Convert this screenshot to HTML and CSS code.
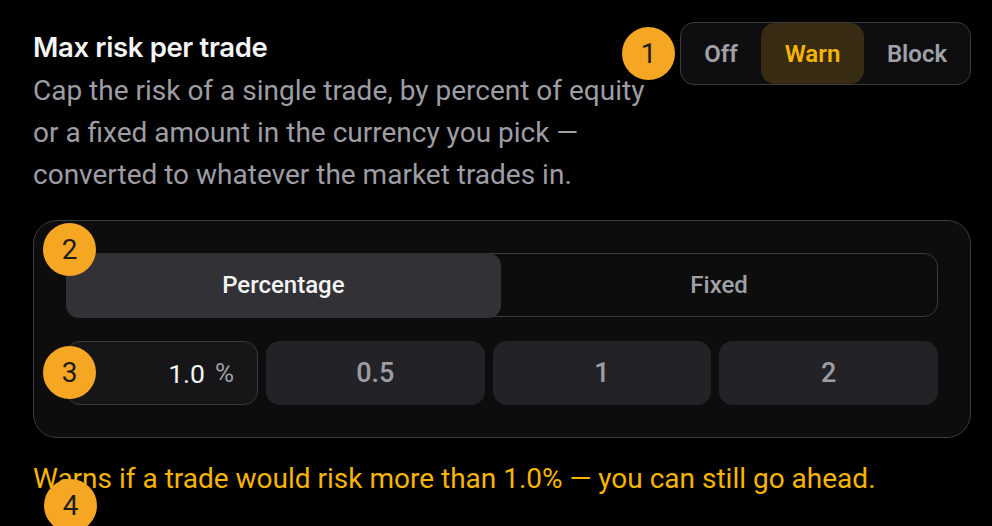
FILE: index.html
```html
<!DOCTYPE html>
<html lang="en">
<head>
<meta charset="utf-8">
<title>Max risk per trade</title>
<link rel="stylesheet" href="styles.css">
</head>
<body>
<section class="rule">
  <header class="rule-head">
    <div class="rule-copy">
      <h2 class="rule-title">Max risk per trade</h2>
      <p class="rule-desc">Cap the risk of a single trade, by percent of equity or a fixed amount in the currency you pick — converted to whatever the market trades in.</p>
    </div>
    <div class="mode-wrap">
      <span class="marker marker-mode">1</span>
      <div class="mode">
        <button class="mode-opt">Off</button>
        <button class="mode-opt is-active">Warn</button>
        <button class="mode-opt">Block</button>
      </div>
    </div>
  </header>

  <div class="panel">
    <span class="marker marker-tabs">2</span>
    <span class="marker marker-values">3</span>
    <div class="tabs">
      <button class="tab is-active">Percentage</button>
      <button class="tab">Fixed</button>
    </div>
    <div class="values">
      <label class="value-input">
        <span class="value-num">1.0</span>
        <span class="value-unit">%</span>
      </label>
      <button class="preset">0.5</button>
      <button class="preset">1</button>
      <button class="preset">2</button>
    </div>
  </div>

  <p class="notice">
    <span class="marker marker-notice">4</span>
    Warns if a trade would risk more than 1.0% — you can still go ahead.
  </p>
</section>
</body>
</html>
```

FILE: styles.css
```css
html, body {
  margin: 0;
  padding: 0;
  background: #000;
  height: 100%;
  overflow: hidden;
}

body {
  font-family: Roboto, "Liberation Sans", sans-serif;
  color: #fff;
}

button {
  font: inherit;
  border: 0;
  background: none;
  color: inherit;
  padding: 0;
  cursor: pointer;
}

.rule {
  padding: 22px 21px 0 33px;
}

.rule-head {
  display: flex;
  justify-content: space-between;
  align-items: flex-start;
}

.rule-copy {
  width: 625px;
}

.rule-title {
  margin: 8px 0 0;
  font-family: Inter, Roboto, sans-serif;
  font-weight: 600;
  font-size: 27.5px;
  line-height: 34px;
  letter-spacing: -0.35px;
  color: #f4f4f5;
}

.rule-desc {
  margin: 6px 0 0;
  font-size: 28px;
  line-height: 42px;
  color: #9d9da3;
}

.mode-wrap {
  position: relative;
}

.mode {
  display: flex;
  height: 63px;
  width: 291px;
  box-sizing: border-box;
  border: 1.5px solid #3a3a3f;
  border-radius: 14px;
  background: #0e0e10;
  overflow: hidden;
}

.mode-opt {
  font-size: 24px;
  font-weight: 600;
  color: #a0a0a7;
  border-radius: 14px;
}

.mode-opt:nth-child(1) { width: 80px; }
.mode-opt:nth-child(2) { width: 103px; }
.mode-opt:nth-child(3) { flex: 1; }

.mode-opt.is-active {
  background: #372b13;
  color: #f7b500;
}

.panel {
  position: relative;
  margin-top: 24px;
  padding: 32px 32px 32px;
  border: 1.5px solid #3a3a3f;
  border-radius: 24px;
  background: #0d0d0e;
  display: flex;
  flex-direction: column;
  gap: 24px;
}

.tabs {
  display: flex;
  height: 64px;
  box-sizing: border-box;
  border: 1.5px solid #3a3a3f;
  border-radius: 14px;
}

.tab {
  flex: 1;
  font-size: 24px;
  font-weight: 500;
  color: #a0a0a7;
  border-radius: 13px;
}

.tab.is-active {
  background: #323236;
  color: #f4f4f5;
  margin: -1.5px 0 -1.5px -1.5px;
}

.values {
  display: grid;
  grid-template-columns: 192px repeat(3, 1fr);
  gap: 8px;
  height: 64px;
}

.value-input {
  display: flex;
  align-items: center;
  justify-content: flex-end;
  gap: 10px;
  padding-right: 23px;
  box-sizing: border-box;
  border: 1.5px solid #3a3a3f;
  border-radius: 14px;
  background: #161618;
}

.value-num {
  font-size: 26.5px;
  color: #f4f4f5;
}

.value-unit {
  font-size: 26px;
  color: #a0a0a7;
}

.preset {
  background: #232327;
  border-radius: 14px;
  font-size: 27px;
  font-weight: 500;
  color: #9d9da3;
}

.notice {
  position: relative;
  margin: 24px 0 0;
  font-size: 28px;
  line-height: 34px;
  color: #f7b500;
}

/* numbered callout dots */
.marker {
  position: absolute;
  width: 53px;
  height: 53px;
  border-radius: 50%;
  background: #f5a623;
  color: #1c1c1c;
  font-family: Roboto, sans-serif;
  font-size: 28px;
  font-weight: 400;
  line-height: 53px;
  text-align: center;
  z-index: 2;
}

.marker-mode { left: -58px; top: 5px; }
.marker-tabs { left: 9px; top: 2px; }
.marker-values { left: 9px; top: 125px; }
.marker-notice { left: 11px; top: 17px; }
```
